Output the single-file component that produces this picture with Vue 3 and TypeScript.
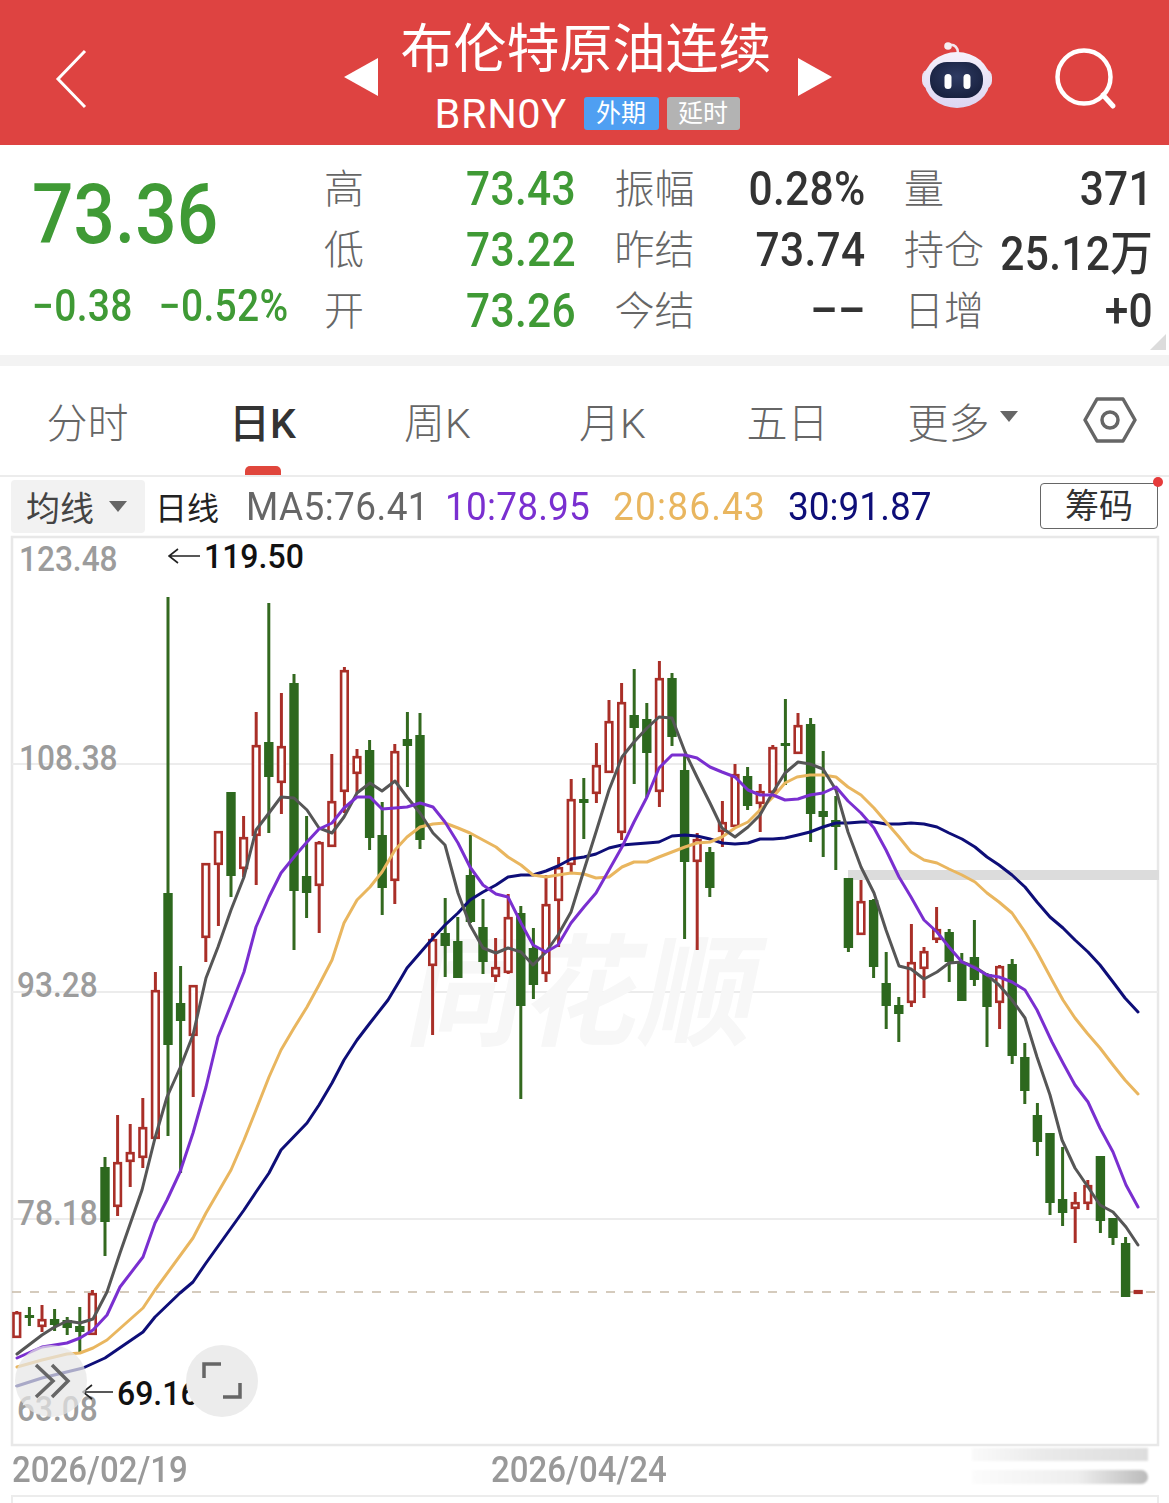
<script setup lang="ts">
type Candle = [number, number, number, number, 'r' | 'g']

const raw: Candle[] = [
  [1311,1312,1338,1338,'r'],[1307,1315,1318,1326,'g'],[1305,1319,1327,1332,'r'],[1309,1319,1325,1331,'g'],
  [1317,1320,1328,1335,'g'],[1307,1326,1332,1353,'g'],[1290,1293,1335,1335,'r'],[1157,1167,1222,1256,'g'],
  [1115,1162,1207,1216,'r'],[1124,1152,1162,1187,'r'],[1098,1127,1158,1168,'r'],[972,990,1139,1139,'r'],
  [597,893,1045,1136,'g'],[966,1003,1021,1173,'g'],[985,985,1036,1097,'r'],[863,863,938,962,'r'],
  [831,831,865,926,'r'],[792,792,876,897,'g'],[816,837,869,877,'r'],[712,745,836,885,'r'],
  [603,742,777,833,'g'],[693,746,783,814,'r'],[674,683,891,950,'g'],[816,876,893,918,'g'],
  [841,842,886,933,'r'],[754,801,847,847,'r'],[667,670,792,813,'r'],[749,756,774,793,'r'],
  [740,750,838,850,'g'],[802,835,888,915,'g'],[744,751,881,904,'r'],[712,739,746,787,'g'],
  [713,735,840,849,'g'],[933,939,966,1035,'r'],[898,933,946,977,'g'],[917,941,978,978,'g'],
  [835,875,922,923,'g'],[899,927,962,974,'g'],[938,967,977,982,'r'],[894,917,973,974,'r'],
  [906,913,1006,1099,'g'],[928,948,985,999,'g'],[875,904,974,982,'r'],[857,867,901,947,'r'],
  [779,799,865,872,'r'],[778,799,803,839,'g'],[743,765,794,803,'r'],[700,721,773,773,'r'],
  [683,702,833,840,'r'],[669,715,728,784,'g'],[703,719,753,797,'g'],[661,678,792,807,'r'],
  [673,678,737,746,'g'],[755,770,862,939,'g'],[833,839,862,950,'r'],[847,852,888,897,'g'],
  [801,822,832,847,'r'],[764,774,827,827,'r'],[767,776,806,810,'g'],[784,791,804,832,'r'],
  [745,747,793,793,'r'],[699,743,746,785,'g'],[713,725,754,754,'r'],[718,724,814,842,'g'],
  [751,811,817,857,'g'],[796,820,827,870,'g'],[878,878,948,952,'g'],[880,901,935,935,'r'],
  [899,900,967,978,'g'],[952,983,1006,1029,'g'],[997,1005,1014,1042,'g'],[924,962,1003,1007,'r'],
  [947,951,969,998,'r'],[907,929,940,943,'r'],[929,932,962,982,'g'],[953,963,1001,1001,'g'],
  [920,957,980,986,'g'],[973,974,1007,1047,'g'],[965,966,1003,1029,'r'],[959,964,1056,1064,'g'],
  [1043,1057,1091,1104,'g'],[1103,1115,1142,1156,'g'],[1133,1133,1203,1215,'g'],[1147,1199,1213,1226,'g'],
  [1192,1202,1209,1243,'r'],[1180,1185,1204,1210,'r'],[1156,1156,1221,1233,'g'],[1218,1218,1238,1245,'g'],
  [1237,1243,1297,1297,'g'],[1290,1290,1294,1294,'r'],
]
const candles = raw.map((c, i) => ({ x: 16.8 + 12.6 * i, high: c[0], top: c[1], bottom: c[2], low: c[3], kind: c[4] }))

const ma5 = '17,1354 42,1335 53,1328 67,1321 80,1323 93,1319 107,1292 120,1253 142,1190 155,1138 167,1097 180,1068 193,1035 206,978 218,947 231,910 244,877 256,830 269,813 281,797 294,798 307,810 319,828 332,833 344,817 357,793 370,783 382,791 395,781 407,797 420,813 433,833 445,845 458,893 470,925 483,948 496,953 508,948 521,952 533,965 546,952 558,935 571,912 584,870 596,832 609,790 622,757 634,742 647,728 659,717 672,718 685,752 697,777 710,803 722,828 735,837 748,827 760,815 773,792 785,773 798,762 810,764 823,769 836,790 848,832 861,867 874,893 886,930 899,966 911,969 924,979 937,972 949,963 962,962 975,967 987,975 999,985 1012,1000 1025,1018 1037,1057 1050,1095 1062,1140 1075,1168 1088,1187 1100,1205 1113,1212 1126,1227 1138,1245'
const ma10 = '17,1358 42,1347 67,1343 80,1338 93,1330 107,1315 120,1287 143,1257 155,1223 167,1200 180,1172 193,1133 206,1087 218,1037 231,1005 244,972 256,927 269,897 281,873 294,857 307,842 319,829 332,823 344,808 357,797 370,797 382,809 395,808 407,807 420,803 433,807 445,822 458,843 470,867 483,885 496,894 508,897 521,923 533,945 546,952 558,945 571,923 584,907 596,893 609,870 622,847 634,822 647,797 659,768 672,755 685,755 697,758 710,767 722,772 735,777 748,790 760,795 773,795 785,800 798,799 810,795 823,793 836,787 848,801 861,813 874,828 886,850 899,877 911,897 924,920 937,932 949,947 962,962 975,968 987,975 999,977 1012,982 1025,990 1037,1010 1052,1042 1063,1063 1075,1085 1088,1102 1100,1128 1113,1152 1126,1185 1138,1207'
const ma20 = '17,1367 42,1360 67,1354 80,1353 93,1348 107,1340 143,1308 155,1290 193,1238 206,1213 231,1170 244,1140 256,1110 269,1077 281,1050 294,1028 307,1007 319,985 332,960 344,923 357,900 370,887 382,872 395,850 407,837 420,827 433,824 445,823 458,828 470,833 483,840 496,847 508,857 521,865 533,875 546,877 558,875 571,873 584,874 596,878 609,877 622,867 634,862 647,862 659,857 672,852 685,847 697,843 710,842 722,837 735,828 748,822 760,810 773,797 785,783 797,777 810,775 823,775 836,777 848,787 861,795 874,808 886,822 899,837 911,852 924,860 937,863 949,869 962,875 975,882 987,893 999,902 1012,913 1025,932 1037,952 1052,980 1063,1000 1075,1018 1087,1033 1100,1048 1113,1065 1125,1080 1138,1094'
const ma30 = '17,1386 42,1378 83,1368 105,1358 143,1332 155,1317 180,1293 193,1282 206,1263 244,1210 256,1192 269,1173 281,1150 307,1123 319,1105 332,1083 344,1060 357,1040 370,1023 388,1000 400,980 407,968 420,953 433,938 445,925 458,913 470,900 483,892 496,885 508,877 521,875 533,875 546,871 558,866 571,859 584,857 596,854 609,848 622,845 634,844 647,843 659,842 672,836 685,835 697,836 710,839 722,843 735,844 748,843 760,839 773,839 785,838 798,835 810,832 823,827 836,823 848,823 861,822 874,822 886,824 899,824 911,823 924,824 937,827 949,833 962,839 975,847 987,857 999,865 1012,875 1025,887 1037,902 1050,917 1063,928 1075,940 1088,952 1100,965 1113,982 1125,998 1138,1012'
const lines = [
  { id: 'ma30', pts: ma30, color: '#0e0e78' },
  { id: 'ma20', pts: ma20, color: '#e9b65f' },
  { id: 'ma5', pts: ma5, color: '#565656' },
  { id: 'ma10', pts: ma10, color: '#7a2fd0' },
]

const axis = [
  { t: '123.48', x: 19, y: 571 },
  { t: '108.38', x: 19, y: 770 },
  { t: '93.28', x: 17, y: 997 },
  { t: '78.18', x: 17, y: 1225 },
  { t: '63.08', x: 17, y: 1421 },
]
const stats = [
  { l: '高', v: '73.43', c: 'green', l2: '振幅', v2: '0.28%', l3: '量', v3: '371' },
  { l: '低', v: '73.22', c: 'green', l2: '昨结', v2: '73.74', l3: '持仓', v3: '25.12万' },
  { l: '开', v: '73.26', c: 'green', l2: '今结', v2: '––', l3: '日增', v3: '+0' },
]
const tabs = ['分时', '日K', '周K', '月K', '五日']
</script>

<template>
  <div class="page">
    <header class="head">
      <svg class="back" width="32" height="60" viewBox="0 0 32 60"><path d="M30 2 3 30l27 28" fill="none" stroke="#fff" stroke-width="3"/></svg>
      <div class="center">
        <svg class="tri" width="34" height="38" viewBox="0 0 34 38"><path d="M34 0v38L0 19z" fill="#fff"/></svg>
        <div class="titles">
          <div class="title">布伦特原油连续</div>
          <div class="sub">
            <span class="code">BRN0Y</span>
            <span class="badge blue">外期</span>
            <span class="badge gray">延时</span>
          </div>
        </div>
        <svg class="tri" width="34" height="38" viewBox="0 0 34 38"><path d="M0 0v38l34-19z" fill="#fff"/></svg>
      </div>
      <svg class="robot" width="76" height="70" viewBox="0 0 76 70">
        <defs>
          <radialGradient id="rb" cx="50%" cy="40%" r="60%"><stop offset="0" stop-color="#2f3b63"/><stop offset="1" stop-color="#18213f"/></radialGradient>
          <linearGradient id="rs" x1="0" y1="0" x2="0" y2="1"><stop offset="0" stop-color="#f6f2fb"/><stop offset="1" stop-color="#dcd6f2"/></linearGradient>
        </defs>
        <path d="M30 5c6-1 9 3 9 8" fill="none" stroke="#f2e7ee" stroke-width="2.5"/>
        <circle cx="29" cy="6" r="3.8" fill="#f6eef2"/>
        <rect x="3" y="29" width="70" height="20" rx="8" fill="#e8e2f2"/>
        <ellipse cx="38" cy="40" rx="33" ry="28" fill="url(#rs)"/>
        <rect x="11" y="22" width="53" height="36" rx="17" fill="url(#rb)"/>
        <rect x="25.5" y="34" width="7" height="15" rx="3.5" fill="#fff"/>
        <rect x="44.5" y="34" width="7" height="15" rx="3.5" fill="#fff"/>
      </svg>
      <svg class="search" width="64" height="64" viewBox="0 0 64 64"><circle cx="30" cy="29" r="26.5" fill="none" stroke="#fff" stroke-width="4.5"/><path d="M49 47 59 58" stroke="#fff" stroke-width="5" stroke-linecap="round"/></svg>
    </header>

    <section class="quote">
      <div class="price">
        <div class="now">73.36</div>
        <div class="chg"><span>−0.38</span><span>−0.52%</span></div>
      </div>
      <div class="grid">
        <template v-for="s in stats" :key="s.l">
          <div class="cell"><span class="lab">{{ s.l }}</span><span class="val green">{{ s.v }}</span></div>
          <div class="cell"><span class="lab">{{ s.l2 }}</span><span class="val">{{ s.v2 }}</span></div>
          <div class="cell"><span class="lab">{{ s.l3 }}</span><span class="val">{{ s.v3 }}</span></div>
        </template>
      </div>
      <svg class="corner" width="16" height="16" viewBox="0 0 16 16"><path d="M16 0v16H0z" fill="#dcdcdc"/></svg>
    </section>
    <div class="gap"></div>

    <nav class="tabs">
      <div v-for="(t, i) in tabs" :key="t" class="tab" :class="{ on: i === 1 }">{{ t }}</div>
      <div class="tab">更多<i class="mini"></i></div>
      <div class="tab">
        <svg width="54" height="48" viewBox="0 0 54 48"><path d="M2 24 14 3h26l12 21-12 21H14z" fill="none" stroke="#666" stroke-width="3.5" stroke-linejoin="round"/><circle cx="27" cy="24" r="8" fill="none" stroke="#666" stroke-width="3.5"/></svg>
      </div>
    </nav>

    <div class="ma">
      <div class="chip">均线<i class="mini chipt"></i></div>
      <span class="day">日线</span>
      <span class="mv c5">MA5:76.41</span>
      <span class="mv c10">10:78.95</span>
      <span class="mv c20">20:86.43</span>
      <span class="mv c30">30:91.87</span>
      <div class="chou">筹码<b class="dot"></b></div>
    </div>

    <svg class="chart" width="1169" height="912" viewBox="0 535 1169 912">
      <rect x="12" y="537" width="1146" height="908" fill="#fff" stroke="#e8e8e8" stroke-width="2.5"/>
      <path d="M12 764H1158M12 992H1158M12 1219H1158" stroke="#ececec" stroke-width="2"/>
      <text class="mark" transform="translate(404 1036) skewX(-12) scale(1.02 1.08)">同花顺</text>
      <rect x="848" y="870" width="311" height="10" fill="#dcdcdc"/>
      <path d="M12 1292H1158" stroke="#c8bba8" stroke-width="1.6" stroke-dasharray="9 9"/>
      <g v-for="c in candles" :key="c.x">
        <path :d="`M${c.x} ${c.high}V${c.low}`" :stroke="c.kind === 'r' ? '#a92f28' : '#33691f'" stroke-width="3"/>
        <rect v-if="c.kind === 'r'" :x="c.x - 3.3" :y="c.top + 1.2" width="6.6" :height="Math.max(c.bottom - c.top - 2.4, 1)" fill="#fff" stroke="#a92f28" stroke-width="2.6"/>
        <rect v-else :x="c.x - 4.7" :y="c.top" width="9.4" :height="c.bottom - c.top" fill="#2d681e"/>
      </g>
      <polyline v-for="l in lines" :key="l.id" :points="l.pts" fill="none" :stroke="l.color" stroke-width="3" stroke-linejoin="round" stroke-linecap="round"/>
      <text v-for="a in axis" :key="a.t" class="axis" :transform="`translate(${a.x} ${a.y}) scale(1 1.1)`">{{ a.t }}</text>
      <path d="M200 556H170M178 549l-9 7 9 7" fill="none" stroke="#222" stroke-width="1.6"/>
      <text class="note" transform="translate(204 568) scale(1 1.06)">119.50</text>
      <path d="M113 1392H84M92 1385l-9 7 9 7" fill="none" stroke="#222" stroke-width="1.6"/>
      <text class="note" transform="translate(117 1405) scale(1 1.06)">69.16</text>
      <circle cx="51" cy="1381" r="36" fill="#e6e6e6" fill-opacity=".72"/>
      <path d="M36 1365l17 16-17 16M52 1365l16 16-16 16" fill="none" stroke="#666" stroke-width="3.5"/>
      <circle cx="222" cy="1381" r="36" fill="#ececec"/>
      <path d="M204 1378v-14h17M223 1397h17v-14" fill="none" stroke="#666" stroke-width="3.5"/>
    </svg>

    <footer class="foot">
      <span class="date d1">2026/02/19</span>
      <span class="date d2">2026/04/24</span>
      <div class="smudge"><i class="s1"></i><i class="s2"></i></div>
    </footer>
    <div class="next"></div>
  </div>
</template>

<style>
html, body { margin: 0; background: #fff; }
</style>

<style scoped>
.page {
  width: 1169px;
  height: 1503px;
  overflow: hidden;
  background: #fff;
  font-family: Roboto, "Noto Sans CJK SC", sans-serif;
  display: flex;
  flex-direction: column;
}
.head {
  height: 145px;
  flex: none;
  background: #de4341;
  display: flex;
  align-items: center;
  color: #fff;
}
.back { margin-left: 55px; margin-top: 12px; flex: none; }
.center {
  width: 488px;
  margin-left: 257px;
  display: flex;
  align-items: center;
  justify-content: space-between;
  margin-top: 8px;
  flex: none;
}
.titles { display: flex; flex-direction: column; align-items: center; margin-top: 0; }
.title { font-size: 53px; line-height: 62px; font-weight: 400; white-space: nowrap; transform: translateX(-2px); }
.sub { display: flex; align-items: center; height: 40px; margin-top: 14px; transform: translateY(-1px); }
.code { font-size: 41.5px; letter-spacing: .6px; width: 149px; font-weight: 400; margin-left: -2px; }
.badge {
  height: 33px;
  border-radius: 3px;
  font-size: 25px;
  line-height: 33px;
  text-align: center;
  width: 75px;
}
.blue { background: #4f9ff2; margin-right: 8px; }
.gray { background: #b3b3b3; width: 73px; }
.robot { margin-left: 87px; margin-top: 5px; flex: none; }
.search { margin-left: 59px; margin-top: 15px; flex: none; }

.quote {
  height: 210px;
  flex: none;
  display: flex;
  position: relative;
}
.price { width: 325px; flex: none; padding-left: 32px; box-sizing: border-box; color: #3f9a35; }
.now {
  font-size: 73px;
  font-weight: 500;
  line-height: 80px;
  margin-top: 30px;
  transform: scaleY(1.13);
  transform-origin: left center;
}
.chg {
  display: flex;
  gap: 26px;
  font-size: 39px;
  font-weight: 500;
  letter-spacing: .3px;
  line-height: 44px;
  margin-top: 29px;
  transform: scaleY(1.12);
  transform-origin: left center;
}
.grid {
  display: grid;
  grid-template-columns: 251px 250px 248px;
  column-gap: 39.5px;
  grid-auto-rows: 61px;
  padding-top: 13px;
}
.cell { display: flex; justify-content: space-between; align-items: center; white-space: nowrap; }
.lab { font-size: 40px; color: #666; font-weight: 300; transform: translate(-1px, -3px); }
.val {
  font-size: 42.5px;
  font-weight: 500;
  color: #333;
  transform: scaleY(1.12);
  letter-spacing: .3px;
}
.val.green { color: #3f9a35; }
.corner { position: absolute; right: 3px; bottom: 5px; }
.gap { height: 11px; flex: none; background: #f3f3f3; }

.tabs {
  height: 109px;
  flex: none;
  display: grid;
  grid-template-columns: repeat(6, 175px) 119px;
  border-bottom: 2px solid #ececec;
}
.tab {
  display: flex;
  align-items: center;
  justify-content: center;
  position: relative;
  font-size: 41px;
  color: #666;
  font-weight: 300;
  padding-bottom: 2px;
}
.tab.on { color: #333; font-weight: 500; }
.tab.on::after {
  content: "";
  position: absolute;
  left: 70px;
  bottom: 0;
  width: 36px;
  height: 9px;
  background: #e0463c;
  border-radius: 5px 5px 0 0;
}
.mini {
  width: 0;
  height: 0;
  border-left: 9px solid transparent;
  border-right: 9px solid transparent;
  border-top: 11px solid #666;
  margin-left: 10px;
  margin-top: -6px;
}

.ma {
  height: 58px;
  flex: none;
  display: flex;
  align-items: center;
  padding-left: 11px;
  position: relative;
  white-space: nowrap;
}
.chip {
  width: 134px;
  height: 53px;
  background: #f2f2f2;
  border-radius: 4px;
  display: flex;
  align-items: center;
  font-size: 34px;
  color: #444;
  padding-left: 15px;
  box-sizing: border-box;
  font-weight: 400;
}
.chipt { margin-left: 15px; margin-top: 0; border-top-color: #666; }
.day { font-size: 32px; margin-left: 10px; color: #222; width: 91px; }
.mv { font-size: 37px; font-weight: 400; transform: scaleY(1.05); }
.c5 { color: #666; width: 199px; letter-spacing: .4px; }
.c10 { color: #7a2fd0; width: 168px; letter-spacing: .2px; }
.c20 { color: #e9b65f; width: 175px; letter-spacing: 1.2px; }
.c30 { color: #0e0e78; }
.chou {
  position: absolute;
  left: 1040px;
  top: 6px;
  width: 118px;
  height: 46px;
  border: 1.5px solid #666;
  border-radius: 4px;
  box-sizing: border-box;
  text-align: center;
  font-size: 34px;
  line-height: 44px;
  color: #333;
}
.dot {
  position: absolute;
  right: -6px;
  top: -7px;
  width: 10px;
  height: 10px;
  border-radius: 50%;
  background: #e63b3b;
}

.chart { display: block; flex: none; }
.mark { font-size: 112px; font-weight: 700; fill: #f7f7f7; letter-spacing: 2px; }
.axis { font-size: 31.6px; font-weight: 500; fill: #9c9c9c; }
.note { font-size: 32px; font-weight: 500; fill: #111; }

.foot { height: 48px; flex: none; position: relative; }
.date {
  position: absolute;
  top: 1px;
  font-size: 33px;
  font-weight: 500;
  color: #999;
  line-height: 44px;
  transform: scaleY(1.1);
}
.d1 { left: 12px; }
.d2 { left: 491px; }
.smudge {
  position: absolute;
  left: 972px;
  top: 1px;
  width: 176px;
  height: 36px;
  display: flex;
  flex-direction: column;
  justify-content: space-between;
}
.s1 { display: block; height: 13px; background: linear-gradient(90deg, #fafafa, #eaeaea 40%, #ddd 100%); filter: blur(1px); }
.s2 { display: block; height: 14px; border-radius: 0 7px 7px 0; background: linear-gradient(90deg, #fcfcfc, #eee 60%, #bbb 100%); filter: blur(1px); }
.next {
  flex: 1;
  margin: 0 10px 0 11px;
  border: 2px solid #ececec;
  border-bottom: none;
}
</style>
